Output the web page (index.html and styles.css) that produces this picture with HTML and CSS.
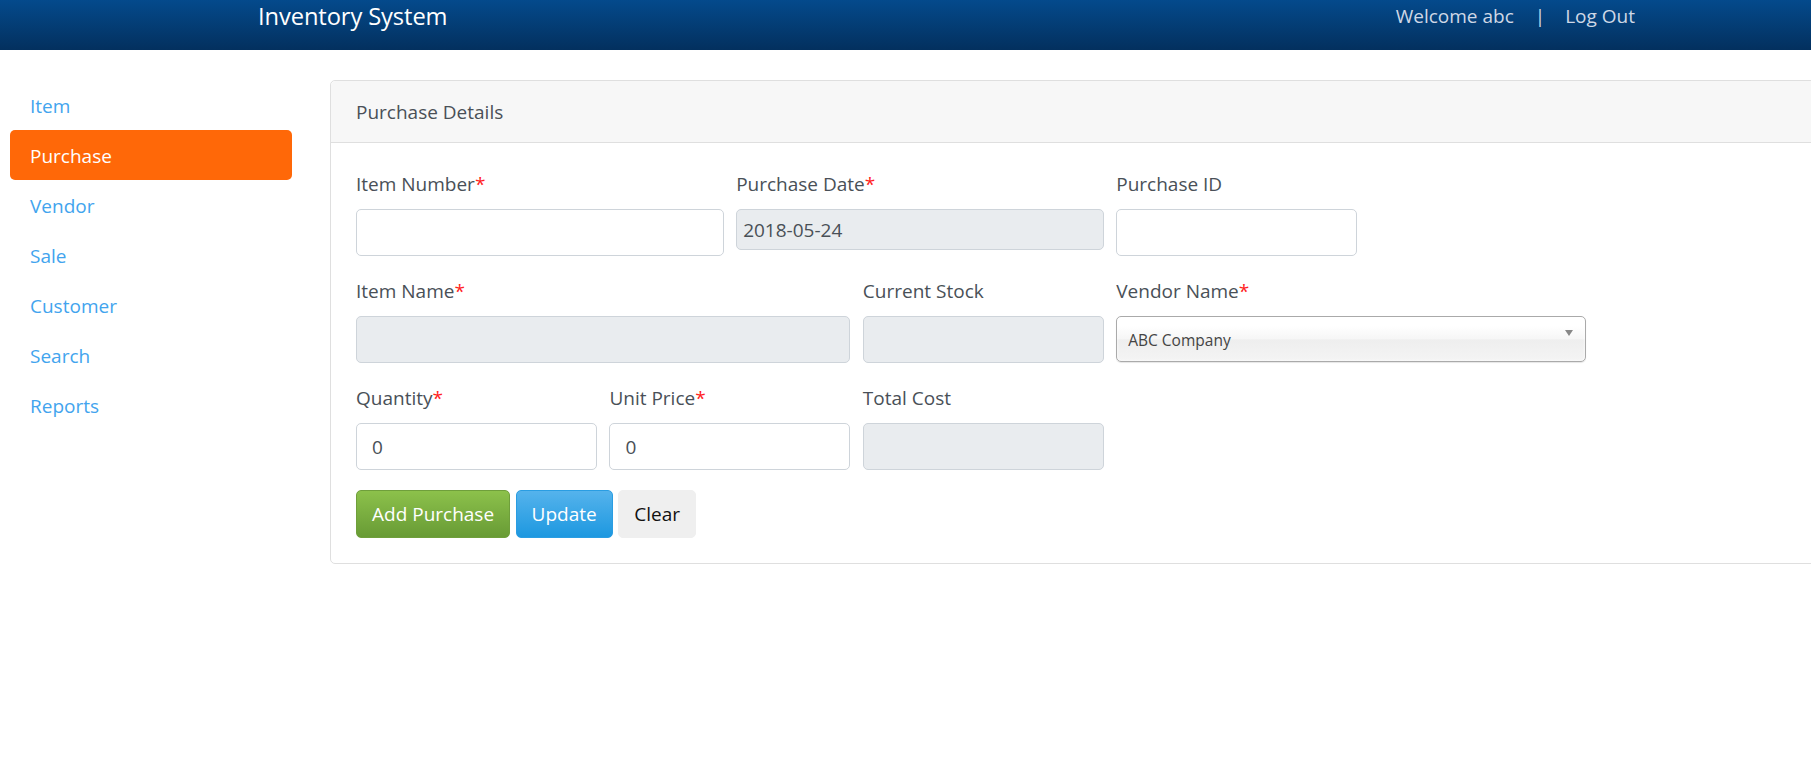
FILE: index.html
```html
<!DOCTYPE html>
<html lang="en">
<head>
<meta charset="utf-8">
<title>Inventory System</title>
<link rel="stylesheet" href="styles.css">
</head>
<body>
<header class="navbar">
  <div class="brand">Inventory System</div>
  <div class="user-links">
    <span class="nav-text">Welcome abc</span>
    <span class="nav-sep">|</span>
    <a class="nav-text" href="#">Log Out</a>
  </div>
</header>
<div class="page">
  <nav class="sidebar">
    <a class="side-link" href="#">Item</a>
    <a class="side-link active" href="#">Purchase</a>
    <a class="side-link" href="#">Vendor</a>
    <a class="side-link" href="#">Sale</a>
    <a class="side-link" href="#">Customer</a>
    <a class="side-link" href="#">Search</a>
    <a class="side-link" href="#">Reports</a>
  </nav>
  <main class="main">
    <section class="card">
      <div class="card-header">Purchase Details</div>
      <div class="card-body">
        <div class="form-row">
          <div class="form-group span-3">
            <label>Item Number<span class="req">*</span></label>
            <input class="form-control" type="text">
          </div>
          <div class="form-group span-3">
            <label>Purchase Date<span class="req">*</span></label>
            <input class="form-control date-control" type="text" value="2018-05-24" readonly>
          </div>
          <div class="form-group span-2">
            <label>Purchase ID</label>
            <input class="form-control" type="text">
          </div>
        </div>
        <div class="form-row">
          <div class="form-group span-4">
            <label>Item Name<span class="req">*</span></label>
            <input class="form-control" type="text" readonly>
          </div>
          <div class="form-group span-2">
            <label>Current Stock</label>
            <input class="form-control" type="text" readonly>
          </div>
          <div class="form-group span-4">
            <label>Vendor Name<span class="req">*</span></label>
            <div class="chosen-single">
              <span>ABC Company</span>
              <span class="chosen-arrow"></span>
            </div>
          </div>
        </div>
        <div class="form-row">
          <div class="form-group span-2">
            <label>Quantity<span class="req">*</span></label>
            <input class="form-control" type="text" value="0">
          </div>
          <div class="form-group span-2">
            <label>Unit Price<span class="req">*</span></label>
            <input class="form-control" type="text" value="0">
          </div>
          <div class="form-group span-2">
            <label>Total Cost</label>
            <input class="form-control" type="text" readonly>
          </div>
        </div>
        <div class="btn-row">
          <button class="btn btn-green" type="button">Add Purchase</button>
          <button class="btn btn-blue" type="button">Update</button>
          <button class="btn btn-light" type="button">Clear</button>
        </div>
      </div>
    </section>
  </main>
</div>
</body>
</html>
```

FILE: styles.css
```css
html, body {
  margin: 0;
  padding: 0;
  overflow: hidden;
  background: #fff;
}
body {
  font-family: "Open Sans", "Noto Sans", sans-serif;
  font-size: 19px;
  color: #495057;
}
a { text-decoration: none; }

.navbar {
  height: 50px;
  box-sizing: border-box;
  background: linear-gradient(#044a8c, #03305e);
  display: flex;
  justify-content: space-between;
  align-items: flex-start;
  padding: 0 176px 0 258px;
}
.brand {
  color: #fff;
  font-size: 23.7px;
  line-height: 32px;
  letter-spacing: -0.1px;
}
.user-links {
  display: flex;
  align-items: flex-start;
  padding-top: 2px;
  line-height: 28px;
}
.nav-text {
  color: #cfd8e6;
  font-size: 19px;
}
.nav-sep {
  color: #cfd8e6;
  font-size: 19px;
  margin: 0 20px 0 21px;
}

.page {
  display: flex;
  align-items: flex-start;
}
.sidebar {
  width: 282px;
  flex-shrink: 0;
  margin: 30px 0 0 10px;
  display: flex;
  flex-direction: column;
}
.side-link {
  display: block;
  height: 50px;
  box-sizing: border-box;
  padding: 11px 20px 9px;
  line-height: 30px;
  color: #42a4ee;
  border-radius: 5px;
}
.side-link.active {
  background: #ff6808;
  color: #fff;
}

.main {
  flex-shrink: 0;
  margin: 30px 0 0 38px;
}
.card {
  width: 1572px;
  border: 1px solid #dfdfdf;
  border-radius: 5px;
  background: #fff;
}
.card-header {
  height: 62px;
  box-sizing: border-box;
  padding: 16px 25px 15px;
  line-height: 30px;
  background: #f7f7f7;
  border-bottom: 1px solid #dfdfdf;
  border-radius: 5px 5px 0 0;
  color: #4a5057;
}
.card-body {
  padding: 26px 25px 25px 25px;
}

.form-row {
  display: grid;
  grid-template-columns: repeat(12, 1fr);
  column-gap: 12.5px;
  width: 1508px;
}
.form-group {
  margin-bottom: 20px;
  display: flex;
  flex-direction: column;
  align-items: flex-start;
}
.span-2 { grid-column: span 2; }
.span-3 { grid-column: span 3; }
.span-4 { grid-column: span 4; }

label {
  display: block;
  line-height: 30px;
  margin-bottom: 10px;
  color: #495057;
}
.req { color: #f22; }

.form-control {
  display: block;
  width: 100%;
  height: 47px;
  box-sizing: border-box;
  padding: 7px 15px;
  font-family: inherit;
  font-size: 19px;
  color: #495057;
  background: #fff;
  border: 1px solid #ced4da;
  border-radius: 5px;
  outline: none;
}
.form-control[readonly] {
  background: #e9ecef;
}
.date-control {
  height: 41px;
  padding: 0 6px;
}

.chosen-single {
  width: 470px;
  height: 46px;
  box-sizing: border-box;
  display: flex;
  align-items: center;
  justify-content: space-between;
  padding: 2px 12px 0 11px;
  border: 1px solid #aaa;
  border-radius: 5px;
  background: linear-gradient(#fff 20%, #f6f6f6 50%, #eee 52%, #f4f4f4 100%);
  box-shadow: inset 0 0 3px #fff, 0 1px 1px rgba(0,0,0,0.1);
  font-size: 15.5px;
  color: #444;
}
.chosen-arrow {
  width: 0;
  height: 0;
  border-left: 4px solid transparent;
  border-right: 4px solid transparent;
  border-top: 6px solid #888;
  align-self: flex-start;
  margin-top: 11px;
}

.btn-row {
  display: flex;
  gap: 5.5px;
}
.btn {
  height: 48px;
  box-sizing: border-box;
  padding: 7px 15px;
  font-family: inherit;
  font-size: 19px;
  line-height: 30px;
  border: 1px solid transparent;
  border-radius: 5px;
  cursor: pointer;
}
.btn-green {
  color: #fff;
  background: linear-gradient(#8cc14b, #689b35);
  border-color: #6f9f3b;
}
.btn-blue {
  color: #fff;
  background: linear-gradient(#55b3ec, #1d98e0);
  border-color: #2a9de2;
}
.btn-light {
  color: #111;
  background: #efefef;
  border-color: #efefef;
}
```
